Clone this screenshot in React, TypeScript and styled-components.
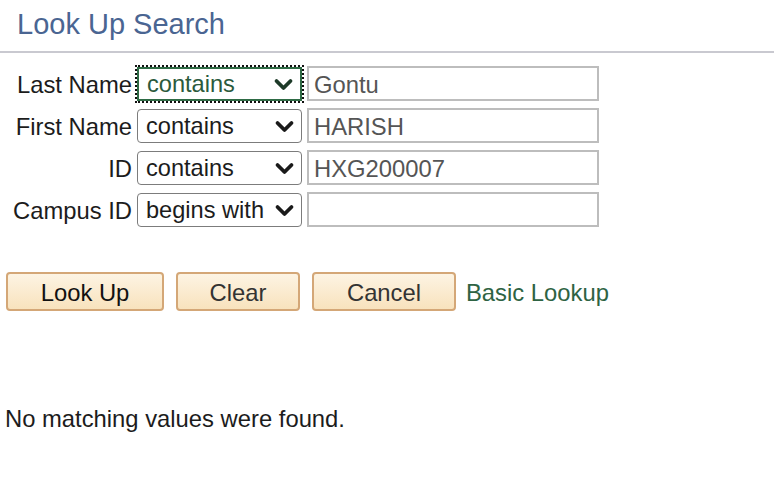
import React from "react";
import styled, { createGlobalStyle, css } from "styled-components";

const Global = createGlobalStyle`
  html, body { margin: 0; padding: 0; background: #ffffff; }
  body { font-family: "Liberation Sans", Arial, sans-serif; color: #1c1c1c; }
`;

const Page = styled.div`
  width: 774px;
  min-height: 484px;
  display: flex;
  flex-direction: column;
`;

const Header = styled.header`
  padding: 8px 0 10px 17px;
  border-bottom: 2px solid #c9c9d0;
`;

const Title = styled.h1`
  margin: 0;
  font-size: 29px;
  line-height: 33px;
  font-weight: normal;
  color: #4a6592;
`;

const Form = styled.div`
  margin-top: 13px;
  display: grid;
  grid-template-columns: 132px 165px 292px;
  grid-auto-rows: 35px;
  column-gap: 5px;
  row-gap: 7px;
  align-items: center;
`;

const Label = styled.label`
  padding-top: 2px;
  text-align: right;
  font-size: 23.8px;
  line-height: 27px;
  color: #1c1c1c;
  white-space: nowrap;
`;

const SelectBox = styled.div<{ $focused?: boolean }>`
  box-sizing: border-box;
  height: 34px;
  display: flex;
  align-items: center;
  justify-content: space-between;
  padding: 2px 6px 0 8px;
  border: 1.5px solid #7c7c7c;
  border-radius: 4px;
  font-size: 23.6px;
  color: #1c1c1c;
  background: #fff;
  white-space: nowrap;
  ${(p) =>
    p.$focused &&
    css`
      border: 2px solid #2e6b45;
      border-radius: 0;
      color: #2b5a3c;
      outline: 2px dotted #111;
      outline-offset: 0;
    `}
`;

const Chevron = styled.svg`
  flex: none;
  width: 21px;
  height: 13px;
`;

const TextBox = styled.div`
  box-sizing: border-box;
  height: 35px;
  display: flex;
  align-items: center;
  padding: 2px 5px 0;
  border: 2px solid #bdbdbd;
  font-size: 23.8px;
  color: #555555;
  background: #fff;
`;

const Actions = styled.div`
  margin-top: 45px;
  display: flex;
  align-items: center;
  padding-left: 6px;
`;

const Button = styled.button<{ $w: number; $muted?: boolean }>`
  box-sizing: border-box;
  width: ${(p) => p.$w}px;
  height: 39px;
  margin-right: 12px;
  padding: 2px 0 0;
  border: 2px solid #d4a777;
  border-radius: 4px;
  background: linear-gradient(#fdf4e3, #f8e2bd);
  font-family: "Liberation Sans", Arial, sans-serif;
  font-size: 23.8px;
  color: ${(p) => (p.$muted ? "#333" : "#111")};
`;

const Link = styled.a`
  margin-left: -2px;
  padding-top: 2px;
  font-size: 23.8px;
  color: #2e6343;
  text-decoration: none;
`;

const Message = styled.p`
  margin: 94px 0 0 5px;
  font-size: 23.8px;
  line-height: 27px;
  color: #1c1c1c;
`;

const ChevronIcon = ({ color }: { color: string }) => (
  <Chevron viewBox="0 0 21 13">
    <polyline
      points="3.5,3 10.5,10 17.5,3"
      fill="none"
      stroke={color}
      strokeWidth="3.8"
      strokeLinecap="round"
      strokeLinejoin="round"
    />
  </Chevron>
);

const rows = [
  { label: "Last Name", op: "contains", value: "Gontu", focused: true },
  { label: "First Name", op: "contains", value: "HARISH" },
  { label: "ID", op: "contains", value: "HXG200007" },
  { label: "Campus ID", op: "begins with", value: "" },
];

export default function App() {
  return (
    <Page>
      <Global />
      <Header>
        <Title>Look Up Search</Title>
      </Header>
      <Form>
        {rows.map((r) => (
          <React.Fragment key={r.label}>
            <Label>{r.label}</Label>
            <SelectBox $focused={r.focused}>
              <span>{r.op}</span>
              <ChevronIcon color={r.focused ? "#1d3a28" : "#1a1a1a"} />
            </SelectBox>
            <TextBox>{r.value}</TextBox>
          </React.Fragment>
        ))}
      </Form>
      <Actions>
        <Button $w={158}>Look Up</Button>
        <Button $w={124} $muted>Clear</Button>
        <Button $w={144} $muted>Cancel</Button>
        <Link href="#">Basic Lookup</Link>
      </Actions>
      <Message>No matching values were found.</Message>
    </Page>
  );
}
